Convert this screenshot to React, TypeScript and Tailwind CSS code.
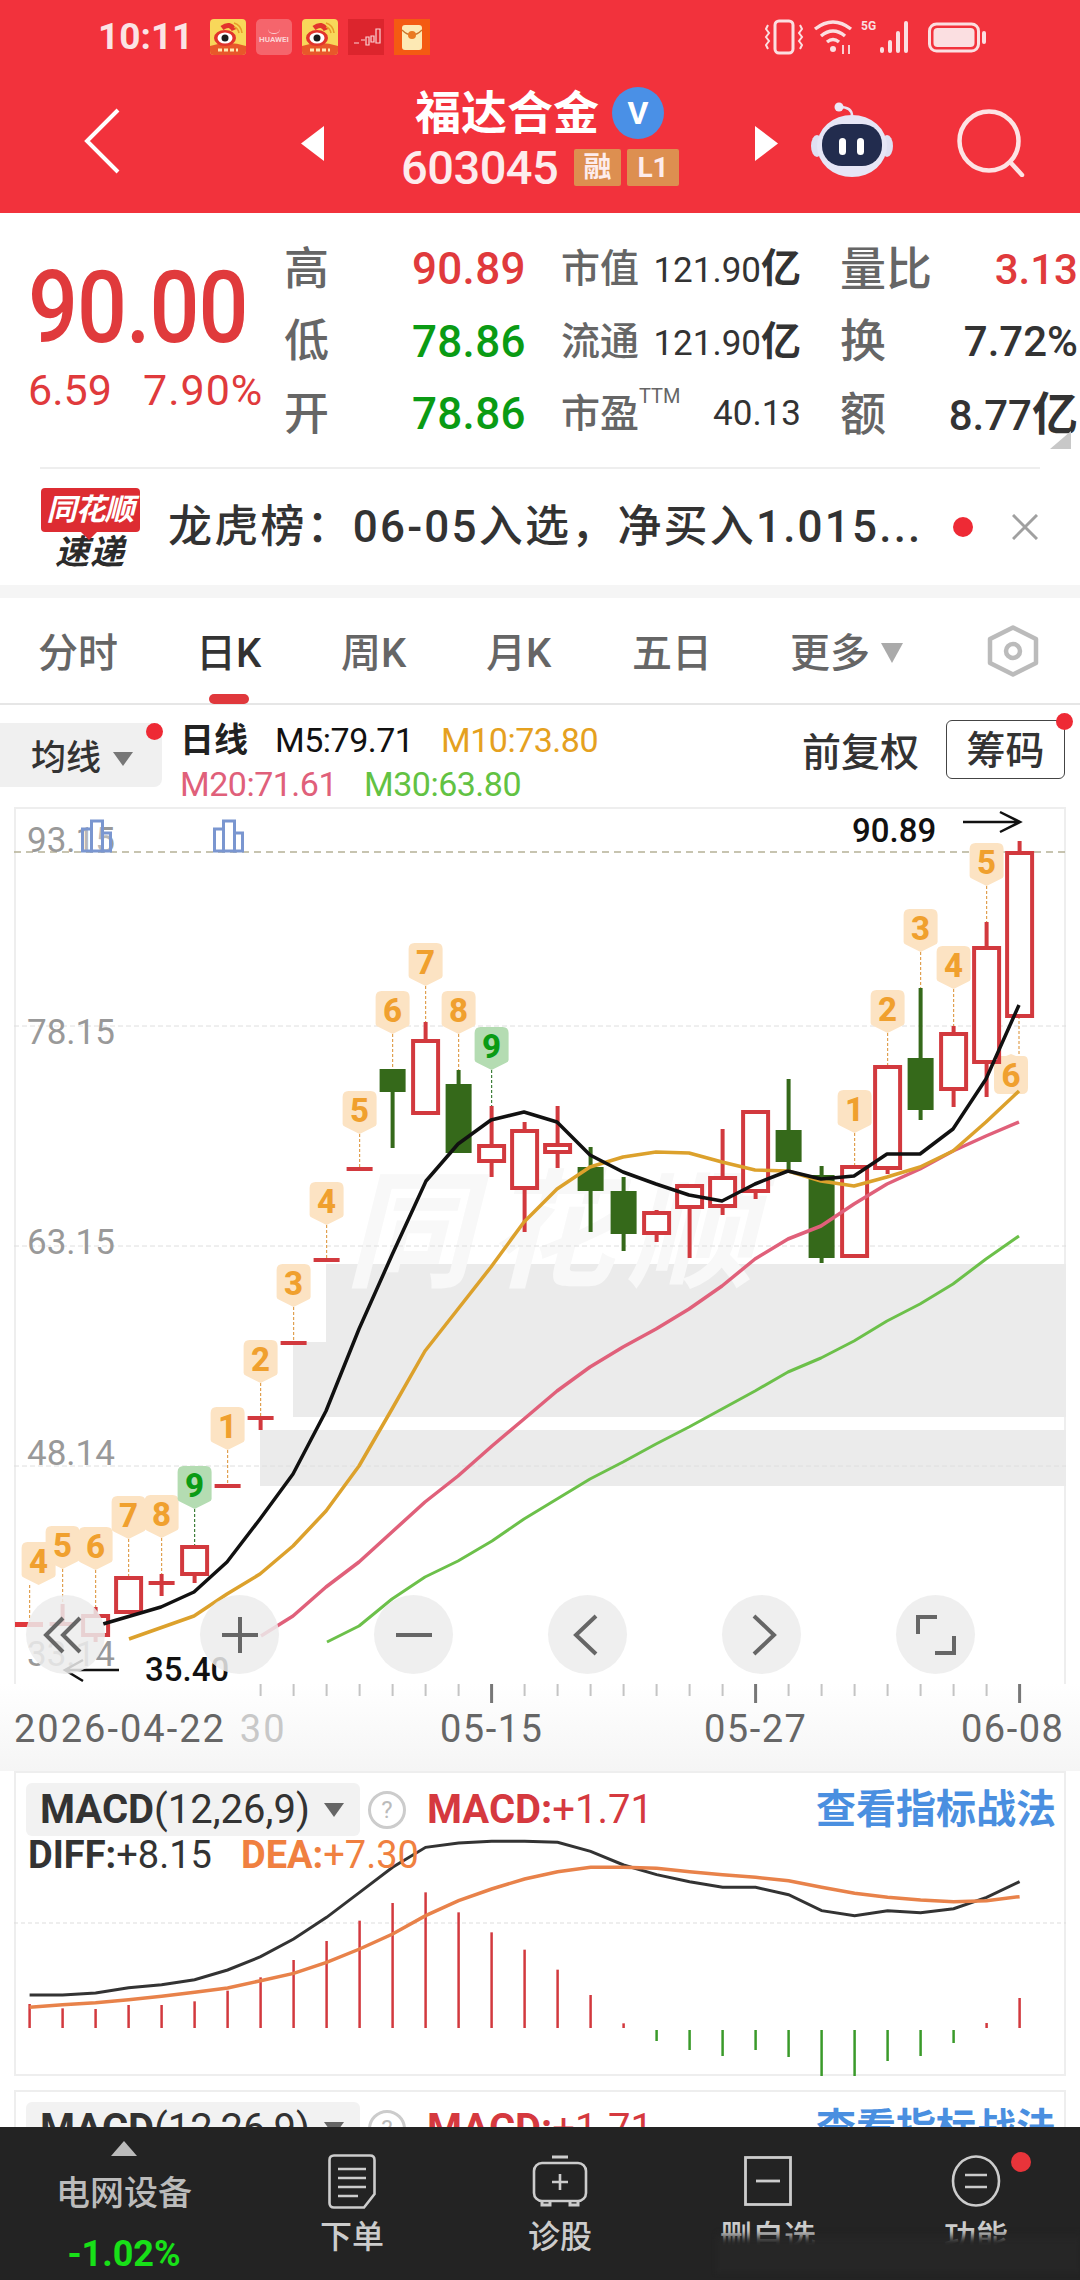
const RED = "#d2393e";
const DARK_GREEN = "#35691a";

// x position of a candle slot, shared by the k-line and the MACD panels
const slot = (i: number) => 29.6 + 33 * i;

type Candle = { i: number; hi: number; top: number; bot: number; lo: number; kind: "up" | "down" };

const CANDLES: Candle[] = [
  { i: 1, hi: 1605, top: 1625, bot: 1625, lo: 1625, kind: "up" },
  { i: 2, hi: 1608, top: 1617, bot: 1636, lo: 1643, kind: "up" },
  { i: 3, hi: 1577, top: 1579, bot: 1613, lo: 1613, kind: "up" },
  { i: 4, hi: 1575, top: 1584, bot: 1584, lo: 1597, kind: "up" },
  { i: 5, hi: 1547, top: 1548, bot: 1575, lo: 1584, kind: "up" },
  { i: 6, hi: 1487, top: 1487, bot: 1487, lo: 1487, kind: "up" },
  { i: 7, hi: 1419, top: 1419, bot: 1419, lo: 1431, kind: "up" },
  { i: 8, hi: 1344, top: 1344, bot: 1344, lo: 1344, kind: "up" },
  { i: 9, hi: 1261, top: 1261, bot: 1261, lo: 1261, kind: "up" },
  { i: 10, hi: 1170, top: 1170, bot: 1170, lo: 1170, kind: "up" },
  { i: 11, hi: 1070, top: 1070, bot: 1093, lo: 1149, kind: "down" },
  { i: 12, hi: 1023, top: 1042, bot: 1114, lo: 1114, kind: "up" },
  { i: 13, hi: 1071, top: 1085, bot: 1154, lo: 1154, kind: "down" },
  { i: 14, hi: 1107, top: 1147, bot: 1162, lo: 1178, kind: "up" },
  { i: 15, hi: 1123, top: 1132, bot: 1189, lo: 1233, kind: "up" },
  { i: 16, hi: 1107, top: 1146, bot: 1153, lo: 1169, kind: "up" },
  { i: 17, hi: 1148, top: 1168, bot: 1192, lo: 1233, kind: "down" },
  { i: 18, hi: 1178, top: 1192, bot: 1235, lo: 1252, kind: "down" },
  { i: 19, hi: 1211, top: 1214, bot: 1234, lo: 1243, kind: "up" },
  { i: 20, hi: 1185, top: 1187, bot: 1208, lo: 1259, kind: "up" },
  { i: 21, hi: 1130, top: 1179, bot: 1207, lo: 1216, kind: "up" },
  { i: 22, hi: 1113, top: 1113, bot: 1192, lo: 1200, kind: "up" },
  { i: 23, hi: 1080, top: 1131, bot: 1163, lo: 1172, kind: "down" },
  { i: 24, hi: 1167, top: 1176, bot: 1259, lo: 1264, kind: "down" },
  { i: 25, hi: 1168, top: 1168, bot: 1257, lo: 1257, kind: "up" },
  { i: 26, hi: 1068, top: 1068, bot: 1169, lo: 1175, kind: "up" },
  { i: 27, hi: 989, top: 1059, bot: 1111, lo: 1121, kind: "down" },
  { i: 28, hi: 1027, top: 1035, bot: 1090, lo: 1108, kind: "up" },
  { i: 29, hi: 923, top: 949, bot: 1063, lo: 1098, kind: "up" },
  { i: 30, hi: 842, top: 854, bot: 1017, lo: 1017, kind: "up" },
];

// sequence markers: candle slot, digit, top of the balloon, y where its stem ends
const MARKS = [
  { i: 0, n: "4", top: 1543, end: 1622, dx: 9 },
  { i: 1, n: "5", top: 1527, end: 1605 },
  { i: 2, n: "6", top: 1528, end: 1608 },
  { i: 3, n: "7", top: 1497, end: 1577 },
  { i: 4, n: "8", top: 1496, end: 1575 },
  { i: 5, n: "9", top: 1467, end: 1547, green: true },
  { i: 6, n: "1", top: 1408, end: 1487 },
  { i: 7, n: "2", top: 1341, end: 1419 },
  { i: 8, n: "3", top: 1265, end: 1344 },
  { i: 9, n: "4", top: 1183, end: 1261 },
  { i: 10, n: "5", top: 1092, end: 1170 },
  { i: 11, n: "6", top: 992, end: 1070 },
  { i: 12, n: "7", top: 944, end: 1023 },
  { i: 13, n: "8", top: 992, end: 1071 },
  { i: 14, n: "9", top: 1028, end: 1107, green: true },
  { i: 25, n: "1", top: 1091, end: 1168 },
  { i: 26, n: "2", top: 991, end: 1068 },
  { i: 27, n: "3", top: 910, end: 989 },
  { i: 28, n: "4", top: 947, end: 1027 },
  { i: 29, n: "5", top: 844, end: 923 },
];

const MA5: [number, number][] = [[103, 1625], [161, 1608], [194, 1593], [227, 1563], [260, 1520], [293, 1475], [326, 1412], [359, 1330], [392, 1256], [426, 1182], [458, 1145], [491, 1121], [524, 1113], [557, 1123], [590, 1156], [623, 1173], [656, 1185], [689, 1196], [722, 1202], [755, 1185], [788, 1172], [821, 1180], [854, 1177], [887, 1155], [920, 1155], [953, 1130], [986, 1080], [1019, 1006]];
const MA10: [number, number][] = [[129, 1640], [194, 1617], [227, 1595], [260, 1575], [293, 1547], [326, 1512], [359, 1467], [392, 1410], [425, 1352], [458, 1310], [491, 1268], [524, 1223], [557, 1190], [590, 1168], [623, 1158], [656, 1153], [689, 1154], [722, 1163], [755, 1171], [788, 1172], [821, 1182], [854, 1187], [887, 1178], [920, 1168], [953, 1152], [986, 1123], [1019, 1092]];
const MA20: [number, number][] = [[261, 1637], [293, 1617], [326, 1588], [359, 1563], [392, 1533], [425, 1503], [458, 1477], [492, 1447], [524, 1420], [557, 1392], [590, 1368], [623, 1348], [656, 1330], [689, 1310], [722, 1287], [755, 1260], [788, 1240], [821, 1227], [854, 1205], [887, 1185], [920, 1170], [953, 1152], [986, 1137], [1019, 1123]];
const MA30: [number, number][] = [[327, 1643], [359, 1627], [392, 1600], [425, 1578], [458, 1562], [492, 1542], [524, 1520], [557, 1500], [590, 1480], [623, 1463], [656, 1445], [689, 1428], [722, 1410], [755, 1392], [788, 1373], [821, 1359], [854, 1342], [887, 1322], [920, 1305], [953, 1285], [986, 1260], [1019, 1237]];

const line = (pts: [number, number][]) => pts.map((p) => p.join(",")).join(" ");

const HIST = [735, 748, 750, 738, 738, 727, 695, 655, 603, 546, 485, 432, 400, 460, 520, 572, 632, 708, 793];
const HIST_DOWN = [2042, 2051, 2057, 2051, 2058, 2077, 2077, 2062, 2057, 2044];
const DIFF = [708, 708, 702, 686, 677, 662, 633, 593, 540, 475, 400, 325, 265, 252, 247, 247, 250, 277, 318, 347, 368, 385, 385, 407, 455, 470, 455, 461, 449, 415, 368];
const DEA = [745, 737, 731, 722, 712, 700, 687, 665, 643, 610, 570, 525, 470, 425, 390, 360, 338, 325, 325, 328, 338, 347, 355, 365, 385, 403, 415, 423, 428, 425, 413];
const macdLine = (vals: number[]) => vals.map((v, i) => `${slot(i)},${v / 3 + 1760}`).join(" ");

function Weibo() {
  return (
    <svg width="36" height="36" viewBox="0 0 36 36" className="shrink-0">
      <rect width="36" height="36" rx="4" fill="#f8d75a" />
      <path d="M0 27 Q18 21 36 27 V32 a4 4 0 0 1 -4 4 H4 a4 4 0 0 1 -4 -4 Z" fill="#e8582a" />
      <ellipse cx="15" cy="19" rx="11" ry="8" fill="#e2342c" />
      <path d="M12 9 Q20 3 24 11" stroke="#e2342c" strokeWidth="5" fill="none" />
      <ellipse cx="15" cy="19" rx="7.5" ry="5.5" fill="#fff" />
      <circle cx="15" cy="19" r="3.5" fill="#1c1c1c" />
      <path d="M24 4 Q31 6 32 14 M24 8 Q28 9 29 14" stroke="#e89a2a" strokeWidth="1.6" fill="none" />
      <path d="M8 31 H28" stroke="#ffe9b0" strokeWidth="3" strokeDasharray="4 2" />
    </svg>
  );
}

function StatusBar() {
  return (
    <div className="flex h-[72px] items-center pl-[98px] pt-[1px]">
      <span className="w-[112px] text-[37px] font-bold text-[#fbe3e5]">10:11</span>
      <div className="flex gap-[10px]">
        <Weibo />
        <div className="flex h-[36px] w-[36px] flex-col items-center justify-center rounded-[5px] bg-[#f5656c]">
          <div className="h-[5px] w-[12px] rounded-b-full border-b border-[#fbc9cc]" />
          <span className="mt-[2px] text-[8px] font-bold leading-none text-[#fbd3d5]">HUAWEI</span>
        </div>
        <Weibo />
        <svg width="36" height="36" viewBox="0 0 36 36">
          <rect width="36" height="36" fill="#dc252d" />
          <path d="M6 24h5M13 21h4M18 18h3v8h-3zM23 17h3v6h-3zM28 10h4v14h-4z" stroke="#fbd3d5" strokeWidth="1.2" fill="none" />
        </svg>
        <svg width="36" height="36" viewBox="0 0 36 36">
          <rect width="36" height="36" fill="#f45a12" />
          <rect x="8" y="6" width="20" height="25" rx="3" fill="#fde9b4" />
          <path d="M8 11 Q18 21 28 11" stroke="#c9742a" strokeWidth="1.2" fill="none" />
          <circle cx="18" cy="16" r="4" fill="#ea7a22" />
        </svg>
      </div>
      <div className="ml-[334px] flex items-center">
        <svg width="40" height="36" viewBox="0 0 40 36" fill="none" stroke="#fbdfe1" strokeWidth="3">
          <rect x="11" y="2" width="18" height="32" rx="4" />
          <path d="M4 6l-2 4 3 4-3 4 3 4-3 4 2 4M36 6l2 4-3 4 3 4-3 4 3 4-2 4" strokeWidth="2" />
        </svg>
        <svg width="42" height="36" viewBox="0 0 42 36" fill="none" stroke="#fbdfe1" strokeWidth="3.4" className="ml-[9px]">
          <path d="M2 10 Q20 -4 38 10M8 17 Q20 7 32 17M14 23 Q20 18 26 23" />
          <circle cx="20" cy="30" r="3" fill="#fbdfe1" stroke="none" />
          <path d="M30 26v9M36 26v9" strokeWidth="1.8" />
        </svg>
        <div className="relative ml-[6px] h-[36px] w-[54px]">
          <span className="absolute left-0 top-[-2px] text-[12px] font-bold text-[#fbdfe1]">5G</span>
          <svg width="54" height="36" viewBox="0 0 54 36" fill="#fbdfe1">
            <rect x="19" y="28" width="4" height="6" rx="2" />
            <rect x="27" y="21" width="4" height="13" rx="2" />
            <rect x="35" y="12" width="4" height="22" rx="2" />
            <rect x="43" y="2" width="4" height="32" rx="2" />
          </svg>
        </div>
        <svg width="59" height="36" viewBox="0 0 59 36" className="ml-[13px]">
          <rect x="1.5" y="5" width="49" height="27" rx="7" fill="none" stroke="#fbdfe1" strokeWidth="3" />
          <rect x="5.5" y="9" width="41" height="19" rx="4" fill="#fbdfe1" />
          <rect x="54" y="12" width="4" height="13" rx="2" fill="#fbdfe1" />
        </svg>
      </div>
    </div>
  );
}

function Triangle({ dir }: { dir: "left" | "right" }) {
  return (
    <svg width="23" height="35" viewBox="0 0 23 35" fill="#fff" className="shrink-0">
      <path d={dir === "left" ? "M23 0V35L0 17.5Z" : "M0 0V35L23 17.5Z"} />
    </svg>
  );
}

function NavBar() {
  return (
    <div className="flex h-[141px] items-start bg-[#f2323c]">
      <svg width="36" height="66" viewBox="0 0 36 66" fill="none" stroke="#fff" strokeWidth="4" className="ml-[84px] mt-[36px]">
        <path d="M34 2L3 33l31 31" />
      </svg>
      <div className="ml-[181px] mt-[54px]">
        <Triangle dir="left" />
      </div>
      <div className="ml-[77px] flex w-[354px] flex-col items-start">
        <div className="flex items-center pl-[14px] pt-[15px]">
          <span className="text-[46px] font-bold leading-[52px] text-white">福达合金</span>
          <span className="ml-[13px] flex h-[52px] w-[52px] items-center justify-center rounded-full bg-[#4a90e6] text-[32px] font-bold text-white">V</span>
        </div>
        <div className="mt-[10px] flex h-[37px] items-center">
          <span className="w-[173px] text-[47px] font-medium leading-none tracking-[-0.5px] text-[#fdeced]">603045</span>
          <span className="flex h-[37px] w-[47px] items-center justify-center rounded-[2px] bg-[#dd8f50] text-[28px] font-bold text-[#fdeced]">融</span>
          <span className="ml-[6px] flex h-[37px] w-[52px] items-center justify-center rounded-[2px] bg-[#dd8f50] text-[28px] font-bold text-[#fdeced]">L1</span>
        </div>
      </div>
      <div className="ml-[0px] mt-[54px]">
        <Triangle dir="right" />
      </div>
      <svg width="84" height="76" viewBox="0 0 84 76" className="ml-[32px] mt-[30px]">
        <path d="M42 14 Q42 5 30 5" stroke="#e9e4f5" strokeWidth="2.5" fill="none" />
        <circle cx="29" cy="5" r="4.5" fill="#ece8f7" />
        <ellipse cx="7" cy="44" rx="6" ry="11" fill="#dfe0f2" />
        <ellipse cx="77" cy="44" rx="6" ry="11" fill="#dfe0f2" />
        <ellipse cx="42" cy="44" rx="35" ry="31" fill="#e6e6f6" />
        <rect x="12" y="22" width="60" height="42" rx="20" fill="#222c4e" />
        <rect x="29" y="36" width="7" height="17" rx="3.5" fill="#fff" />
        <rect x="47" y="36" width="7" height="17" rx="3.5" fill="#fff" />
      </svg>
      <svg width="70" height="68" viewBox="0 0 70 68" fill="none" stroke="#fde3e4" strokeWidth="4.5" className="ml-[63px] mt-[37px] shrink-0">
        <circle cx="32" cy="32" r="29.5" />
        <path d="M54 54l11 12" strokeLinecap="round" />
      </svg>
    </div>
  );
}

function Quote({ label, value, color, name, figure, unit, label2, value2, color2, unit2 }: {
  label: string; value: string; color: string; name: React.ReactNode; figure: string; unit?: string;
  label2: string; value2: string; color2: string; unit2?: string;
}) {
  return (
    <div className="flex h-[72.5px] items-center">
      <span className="w-[128px] text-[45px] font-medium text-[#666]">{label}</span>
      <span className={`w-[149px] text-[44px] font-medium tracking-[0.3px] ${color}`}>{value}</span>
      <div className="flex w-[240px] items-center justify-between">
        <span className="text-[39px] font-medium text-[#666]">{name}</span>
        <span className="text-[35px] text-[#333]">
          {figure}
          {unit && <span className="text-[40px] font-bold">{unit}</span>}
        </span>
      </div>
      <div className="ml-[39px] flex w-[238px] items-center justify-between">
        <span className="text-[46px] font-medium text-[#666]">{label2}</span>
        <span className={`whitespace-nowrap text-[42px] font-medium ${color2}`}>
          {value2}
          {unit2 && <span className="text-[46px] font-bold">{unit2}</span>}
        </span>
      </div>
    </div>
  );
}

function PriceBlock() {
  return (
    <div className="relative flex h-[254px]">
      <div className="w-[284px] pl-[28px] pt-[39px] text-[#e03a3c]">
        <div className="origin-top scale-y-[1.13] text-[88px] font-medium leading-[100px] tracking-[-1px]">90.00</div>
        <div className="mt-[14px] flex text-[43px] leading-[48px]">
          <span className="w-[115px]">6.59</span>
          <span className="tracking-[1px]">7.90%</span>
        </div>
      </div>
      <div className="pt-[20px]">
        <Quote label="高" value="90.89" color="text-[#e03a3c]" name="市值" figure="121.90" unit="亿" label2="量比" value2="3.13" color2="text-[#e03a3c]" />
        <Quote label="低" value="78.86" color="text-[#0a9b14]" name="流通" figure="121.90" unit="亿" label2="换" value2="7.72%" color2="text-[#333]" />
        <Quote
          label="开"
          value="78.86"
          color="text-[#0a9b14]"
          name={<>市盈<sup className="align-[14px] text-[20px] font-normal">TTM</sup></>}
          figure="40.13"
          label2="额"
          value2="8.77"
          color2="text-[#333]"
          unit2="亿"
        />
      </div>
      <div className="absolute bottom-[18px] right-[9px] h-0 w-0 border-b-[18px] border-l-[21px] border-b-[#c8c8c8] border-l-transparent" />
    </div>
  );
}

function NewsBanner() {
  return (
    <div className="mx-[40px] flex h-[118px] items-center border-t-2 border-[#eeeeee]">
      <div className="flex w-[100px] shrink-0 flex-col items-center pt-[2px]">
        <div className="relative flex h-[44px] w-[99px] items-center justify-center rounded-[4px] bg-[#dd2c32]">
          <span className="text-[30px] font-bold italic leading-none tracking-[-1px] text-white">同花顺</span>
          <div className="absolute bottom-[-8px] left-[40px] h-0 w-0 border-x-[8px] border-t-[8px] border-x-transparent border-t-[#dd2c32]" />
        </div>
        <span className="mt-[3px] text-[34px] font-bold italic leading-[34px] tracking-[1px] text-[#2b2b2b]">速递</span>
      </div>
      <span className="ml-[28px] w-[752px] whitespace-nowrap text-[44px] font-medium tracking-[2.2px] text-[#333]">龙虎榜：06-05入选，净买入1.015...</span>
      <div className="ml-[33px] h-[20px] w-[20px] shrink-0 rounded-full bg-[#ee2a35]" />
      <svg width="26" height="26" viewBox="0 0 26 26" stroke="#a0a0a0" strokeWidth="3" className="ml-[39px] shrink-0">
        <path d="M1 1l24 24M25 1L1 25" />
      </svg>
    </div>
  );
}

function Tabs() {
  const tabs = [
    { label: "分时", w: "w-[158px]" },
    { label: "日K", w: "w-[145px]", on: true },
    { label: "周K", w: "w-[145px]" },
    { label: "月K", w: "w-[146px]" },
    { label: "五日", w: "w-[158px]" },
  ];
  return (
    <div className="relative flex h-[107px] items-start border-b-2 border-[#e6e6e6] pl-[38px] pt-[32px]">
      {tabs.map((t) => (
        <span key={t.label} className={`${t.w} text-[40px] font-medium leading-[48px] ${t.on ? "font-bold text-[#333]" : "text-[#666]"}`}>{t.label}</span>
      ))}
      <span className="text-[40px] font-medium leading-[48px] text-[#666]">更多</span>
      <div className="ml-[11px] mt-[13px] h-0 w-0 border-x-[11px] border-t-[20px] border-x-transparent border-t-[#aaa]" />
      <svg width="54" height="52" viewBox="0 0 54 52" fill="none" stroke="#bbb" strokeWidth="4.500" className="ml-[83px] mt-[-5px]">
        <path d="M27 2.500L50 14V38L27 49.500 4 38V14Z" strokeLinejoin="round" />
        <circle cx="27" cy="26" r="7" />
      </svg>
      <div className="absolute bottom-[-1px] left-[209px] h-[10px] w-[40px] rounded-full bg-[#e0383c]" />
    </div>
  );
}

function ChartToolbar() {
  return (
    <div className="relative flex h-[102px] items-start">
      <div className="relative mt-[18px] flex h-[64px] w-[162px] items-center rounded-r-[8px] bg-[#f0f0f0] pl-[31px] pt-[8px]">
        <span className="text-[35px] font-medium text-[#333]">均线</span>
        <div className="ml-[12px] h-0 w-0 border-x-[10px] border-t-[14px] border-x-transparent border-t-[#777]" />
        <div className="absolute right-[-1px] top-0 h-[17px] w-[17px] rounded-full bg-[#ee2a35]" />
      </div>
      <div className="ml-[18px] mt-[15px] flex flex-col text-[34px] leading-[40px]">
        <div className="flex items-center whitespace-nowrap">
          <span className="w-[95px] font-bold text-[#222]">日线</span>
          <span className="w-[166px] tracking-[-0.5px] text-[#111]">M5:79.71</span>
          <span className="tracking-[-0.5px] text-[#e5a11f]">M10:73.80</span>
        </div>
        <div className="mt-[4px] flex items-center whitespace-nowrap">
          <span className="w-[184px] tracking-[-0.5px] text-[#e0607a]">M20:71.61</span>
          <span className="tracking-[-0.5px] text-[#62c243]">M30:63.80</span>
        </div>
      </div>
      <span className="absolute left-[802px] top-[25px] text-[39px] font-medium leading-[46px] text-[#333]">前复权</span>
      <div className="absolute left-[946px] top-[15px] flex h-[59px] w-[119px] items-center justify-center rounded-[6px] border border-[#444] pt-[3px] text-[39px] font-medium text-[#333]">筹码</div>
      <div className="absolute left-[1056px] top-[8px] h-[17px] w-[17px] rounded-full bg-[#ee2a35]" />
    </div>
  );
}

function Balloon({ x, top, n, green }: { x: number; top: number; n: string; green?: boolean }) {
  const body = top + 33;
  return (
    <g>
      <path
        d={`M${x - 11} ${top}h22q6 0 6 6V${body}q0 2-3 3l-14 7-14-7q-3-1-3-3V${top + 6}q0-6 6-6Z`}
        fill={green ? "#b4dcb2" : "#fce3c3"}
      />
      <text x={x} y={top + 31} textAnchor="middle" fontSize="33" fontWeight="800" fill={green ? "#0a9b14" : "#f0a02e"}>{n}</text>
    </g>
  );
}

function KLine() {
  return (
    <svg width="1052" height="877" viewBox="14 808 1052 877" className="block">
      <rect x="326" y="1265" width="740" height="78" fill="#ebebeb" />
      <rect x="293" y="1343" width="773" height="75" fill="#ebebeb" />
      <rect x="260" y="1431" width="806" height="56" fill="#ebebeb" />
      <text x="345" y="1278" fontSize="128" fontWeight="700" fontStyle="italic" fill="#f8f8f8" textLength="410">同花顺</text>

      <path d="M14 853H1066" stroke="#b5b197" strokeWidth="1.5" strokeDasharray="7 5" />
      <path d="M14 1027H1066M14 1247H1066M14 1467H1066" stroke="#dedede" strokeWidth="1" strokeDasharray="5 3" />

      <g fill="#999" fontSize="35">
        <text x="27" y="853">93.15</text>
        <text x="27" y="1045">78.15</text>
        <text x="27" y="1255">63.15</text>
        <text x="27" y="1466">48.14</text>
        <text x="27" y="1667">33.14</text>
      </g>
      {[81, 213].map((x) => (
        <g key={x} fill="#fff" fillOpacity="0.3" stroke="#7a96d0" strokeWidth="3">
          <rect x={x + 1.5} y="830" width="9" height="22" />
          <rect x={x + 10.5} y="822" width="11" height="30" />
          <rect x={x + 21.5} y="834" width="8" height="18" />
        </g>
      ))}

      {MARKS.map((m) => (
        <path key={`s${m.i}`} d={`M${slot(m.i)} ${m.top + 43}V${m.end}`} stroke={m.green ? "#3f7f3a" : "#e0a050"} strokeWidth="1.2" strokeDasharray="3 2" />
      ))}
      <path d="M1019 1017V1057" stroke="#e0a050" strokeWidth="1.2" strokeDasharray="3 2" />
      {MARKS.map((m) => (
        <Balloon key={`b${m.i}`} x={slot(m.i) + (m.dx ?? 0)} top={m.top} n={m.n} green={m.green} />
      ))}
      <path d="M1011 1055l5 2h8q4 0 4 6v26q0 6-6 6h-22q-6 0-6-6v-26q0-6 4-6h8Z" fill="#fce3c3" />
      <text x="1011" y="1088" textAnchor="middle" fontSize="33" fontWeight="800" fill="#f0a02e">6</text>

      <rect x="15" y="1623" width="28" height="5" fill="#e0383c" />
      {CANDLES.map((c) => {
        const x = slot(c.i);
        const color = c.kind === "up" ? RED : DARK_GREEN;
        const flat = c.bot - c.top < 1;
        return (
          <g key={c.i}>
            <path d={`M${x} ${c.hi}V${c.top}M${x} ${c.bot}V${c.lo}`} stroke={color} strokeWidth="4" />
            {flat ? (
              <rect x={x - 13} y={c.top - 2} width="26" height="4" fill={color} />
            ) : c.kind === "up" ? (
              <rect x={x - 12.5} y={c.top} width="25" height={c.bot - c.top} fill="#fff" stroke={color} strokeWidth="4" />
            ) : (
              <rect x={x - 13} y={c.top} width="26" height={c.bot - c.top} fill={color} />
            )}
          </g>
        );
      })}

      <g fill="none" strokeLinejoin="round">
        <polyline points={line(MA30)} stroke="#6cc04a" strokeWidth="3" />
        <polyline points={line(MA20)} stroke="#e0607a" strokeWidth="3.500" />
        <polyline points={line(MA10)} stroke="#dca12c" strokeWidth="3.500" />
        <polyline points={line(MA5)} stroke="#111" strokeWidth="3.500" />
      </g>

      <text x="852" y="843" fontSize="33" fontWeight="500" fill="#111">90.89</text>
      <path d="M963 823H1019M1000 813L1020 823 1000 833" stroke="#111" strokeWidth="2.5" fill="none" />
      <text x="145" y="1682" fontSize="33" fontWeight="500" fill="#111">35.40</text>
      <path d="M119 1671H65M83 1661L65 1671 83 1682" stroke="#111" strokeWidth="2.5" fill="none" />
    </svg>
  );
}

function RoundButton({ children }: { children: React.ReactNode }) {
  return (
    <div className="flex h-[79px] w-[79px] items-center justify-center rounded-full bg-[#ececec]/85">
      {children}
    </div>
  );
}

function ChartButtons() {
  const props = { width: 46, height: 46, viewBox: "0 0 46 46", fill: "none", stroke: "#666", strokeWidth: 4 };
  return (
    <div className="absolute left-[10px] top-[786px] flex gap-[95px]">
      <RoundButton>
        <svg {...props}><path d="M20 6L3 23l17 17M37 6L20 23l17 17" /></svg>
      </RoundButton>
      <RoundButton>
        <svg {...props}><path d="M23 5V41M5 23H41" /></svg>
      </RoundButton>
      <RoundButton>
        <svg {...props}><path d="M5 23H41" /></svg>
      </RoundButton>
      <RoundButton>
        <svg {...props}><path d="M31 4L11 23l20 19" /></svg>
      </RoundButton>
      <RoundButton>
        <svg {...props}><path d="M15 4l20 19-20 19" /></svg>
      </RoundButton>
      <RoundButton>
        <svg {...props}><path d="M24 5H5V22M22 41H41V24" /></svg>
      </RoundButton>
    </div>
  );
}

function DateAxis() {
  const ticks = Array.from({ length: 24 }, (_, k) => k + 7);
  return (
    <div className="relative h-[87px] bg-gradient-to-b from-white to-[#f5f5f5]">
      <svg width="1080" height="24" viewBox="0 0 1080 24" className="block">
        {ticks.map((i) => {
          const big = i === 14 || i === 22 || i === 30;
          return <path key={i} d={`M${slot(i)} 0V${big ? 19 : 12}`} stroke={big ? "#777" : "#c4c4c4"} strokeWidth={big ? 3 : 2} />;
        })}
      </svg>
      <div className="absolute left-[14px] top-[25px] flex items-center text-[38px] leading-[40px] tracking-[2px] text-[#666]">
        <span>2026-04-22</span>
        <span className="ml-[14px] text-[#c8c8c8]">30</span>
      </div>
      <span className="absolute left-[440px] top-[25px] text-[38px] leading-[40px] tracking-[1.5px] text-[#666]">05-15</span>
      <span className="absolute left-[704px] top-[25px] text-[38px] leading-[40px] tracking-[1.5px] text-[#666]">05-27</span>
      <span className="absolute left-[961px] top-[25px] text-[38px] leading-[40px] tracking-[1.5px] text-[#666]">06-08</span>
    </div>
  );
}

function MacdHeader() {
  return (
    <div className="flex h-[53px] items-center">
      <div className="ml-[10px] flex h-[53px] w-[334px] items-center rounded-[6px] bg-[#f2f2f2] pl-[14px]">
        <span className="w-[270px] whitespace-nowrap text-[40px] text-[#333]"><span className="font-bold">MACD</span>(12,26,9)</span>
        <div className="ml-[14px] h-0 w-0 border-x-[10px] border-t-[14px] border-x-transparent border-t-[#666]" />
      </div>
      <div className="ml-[8px] flex h-[38px] w-[38px] items-center justify-center rounded-full border-[3px] border-[#ccc] text-[24px] text-[#bbb]">?</div>
      <span className="ml-[21px] w-[389px] text-[40px] text-[#d5393f]"><span className="font-bold">MACD:</span>+1.71</span>
      <span className="text-[40px] font-bold text-[#4a8fe0]">查看指标战法</span>
    </div>
  );
}

function MacdPanel() {
  return (
    <div className="relative mx-[14px] h-[305px] w-[1052px] border-x-2 border-y-2 border-[#eeeeee] pt-[10px]">
      <MacdHeader />
      <svg width="1080" height="305" viewBox="0 1772 1080 305" className="absolute left-[-16px] top-[-2px]">
        <path d="M14 1924H1066" stroke="#ddd" strokeWidth="1" strokeDasharray="4 3" />
        {HIST.map((v, i) => (
          <path key={i} d={`M${slot(i)} ${v / 3 + 1760}V2029`} stroke={RED} strokeWidth="2.5" />
        ))}
        {HIST_DOWN.map((v, k) => (
          <path key={k} d={`M${slot(k + 19)} 2031V${v}`} stroke="#3a9a2a" strokeWidth="2.5" />
        ))}
        <path d={`M${slot(29)} 2024V2029M${slot(30)} 1999V2029`} stroke={RED} strokeWidth="2.5" />
        <polyline points={macdLine(DIFF)} fill="none" stroke="#333" strokeWidth="3" />
        <polyline points={macdLine(DEA)} fill="none" stroke="#e8824a" strokeWidth="3.5" />
      </svg>
      <div className="relative mt-[3px] flex pl-[12px] text-[38px] leading-[32px]">
        <span className="w-[213px] text-[#333]"><span className="font-bold">DIFF:</span>+8.15</span>
        <span className="text-[#f08040]"><span className="font-bold">DEA:</span>+7.30</span>
      </div>
    </div>
  );
}

function BottomItem({ label, icon, dot }: { label: string; icon: React.ReactNode; dot?: boolean }) {
  return (
    <div className="relative flex w-[208px] shrink-0 flex-col items-center">
      <div className="flex h-[56px] items-center">{icon}</div>
      <span className="mt-[10px] whitespace-nowrap text-[32px] font-medium leading-[36px] text-[#ccc]">{label}</span>
      {dot && <div className="absolute left-[139px] top-[-1px] h-[20px] w-[20px] rounded-full bg-[#e8343a]" />}
    </div>
  );
}

function BottomBar() {
  return (
    <div className="relative flex h-[153px] shrink-0 items-start bg-[#232323] pt-[26px]">
      <div className="absolute left-[0px] top-[14px] flex w-[248px] flex-col items-center">
        <div className="h-0 w-0 border-x-[13px] border-b-[15px] border-x-transparent border-b-[#bbb]" />
        <span className="mt-[17px] text-[34px] font-medium leading-[40px] text-[#bbb]">电网设备</span>
        <span className="mt-[23px] text-[36px] font-bold leading-[36px] text-[#18e018]">-1.02%</span>
      </div>
      <div className="ml-[248px] flex">
        <BottomItem
          label="下单"
          icon={
            <svg width="48" height="55" viewBox="0 0 48 55" fill="none" stroke="#ccc" strokeWidth="2.6">
              <path d="M6 1.5H42Q46.5 1.500 46.500 6V40L36 53.500H6Q1.500 53.500 1.500 49V6Q1.500 1.500 6 1.500Z" />
              <path d="M10 15H38M10 24H38M10 33H38M10 42H30" />
            </svg>
          }
        />
        <BottomItem
          label="诊股"
          icon={
            <svg width="56" height="52" viewBox="0 0 56 52" fill="none" stroke="#ccc" strokeWidth="2.6">
              <path d="M20 2H36" strokeWidth="3" />
              <rect x="2" y="8" width="52" height="38" rx="8" />
              <path d="M28 19V35M20 27H36" />
              <path d="M10 46v4h8v-4M38 46v4h8v-4" strokeWidth="3" />
            </svg>
          }
        />
        <BottomItem
          label="删自选"
          icon={
            <svg width="48" height="50" viewBox="0 0 48 50" fill="none" stroke="#ccc" strokeWidth="2.8">
              <rect x="1.500" y="1.500" width="45" height="47" />
              <path d="M12 25H36" />
            </svg>
          }
        />
        <BottomItem
          label="功能"
          dot
          icon={
            <svg width="50" height="52" viewBox="0 0 50 52" fill="none" stroke="#ccc" strokeWidth="2.6">
              <ellipse cx="25" cy="26" rx="23" ry="24.500" />
              <path d="M14 20H36M14 32H36" />
            </svg>
          }
        />
      </div>
      <div className="absolute bottom-[7px] left-[716px] h-[42px] w-[364px] bg-gradient-to-b from-[#262626]/0 from-0% to-[#262626] to-25% blur-[2px]" />
    </div>
  );
}

export default function App() {
  return (
    <div className="flex h-[2280px] w-[1080px] flex-col overflow-hidden bg-white font-['Roboto','Noto_Sans_CJK_SC',sans-serif]">
      <div className="h-[213px] shrink-0 bg-[#f2323c]">
        <StatusBar />
        <NavBar />
      </div>
      <PriceBlock />
      <NewsBanner />
      <div className="h-[13px] shrink-0 bg-[#f5f5f5]" />
      <Tabs />
      <ChartToolbar />
      <div className="relative min-h-0 flex-1 overflow-hidden">
        <div className="relative mx-[14px] h-[877px] w-[1052px] border-x-2 border-t-2 border-[#eeeeee]">
          <div className="absolute left-[-2px] top-[-2px]">
            <KLine />
          </div>
          <ChartButtons />
        </div>
        <DateAxis />
        <MacdPanel />
        <div className="mt-[14px]">
          <div className="relative mx-[14px] h-[120px] w-[1052px] border-x-2 border-t-2 border-[#eeeeee] pt-[10px]">
            <MacdHeader />
          </div>
        </div>
      </div>
      <BottomBar />
    </div>
  );
}
